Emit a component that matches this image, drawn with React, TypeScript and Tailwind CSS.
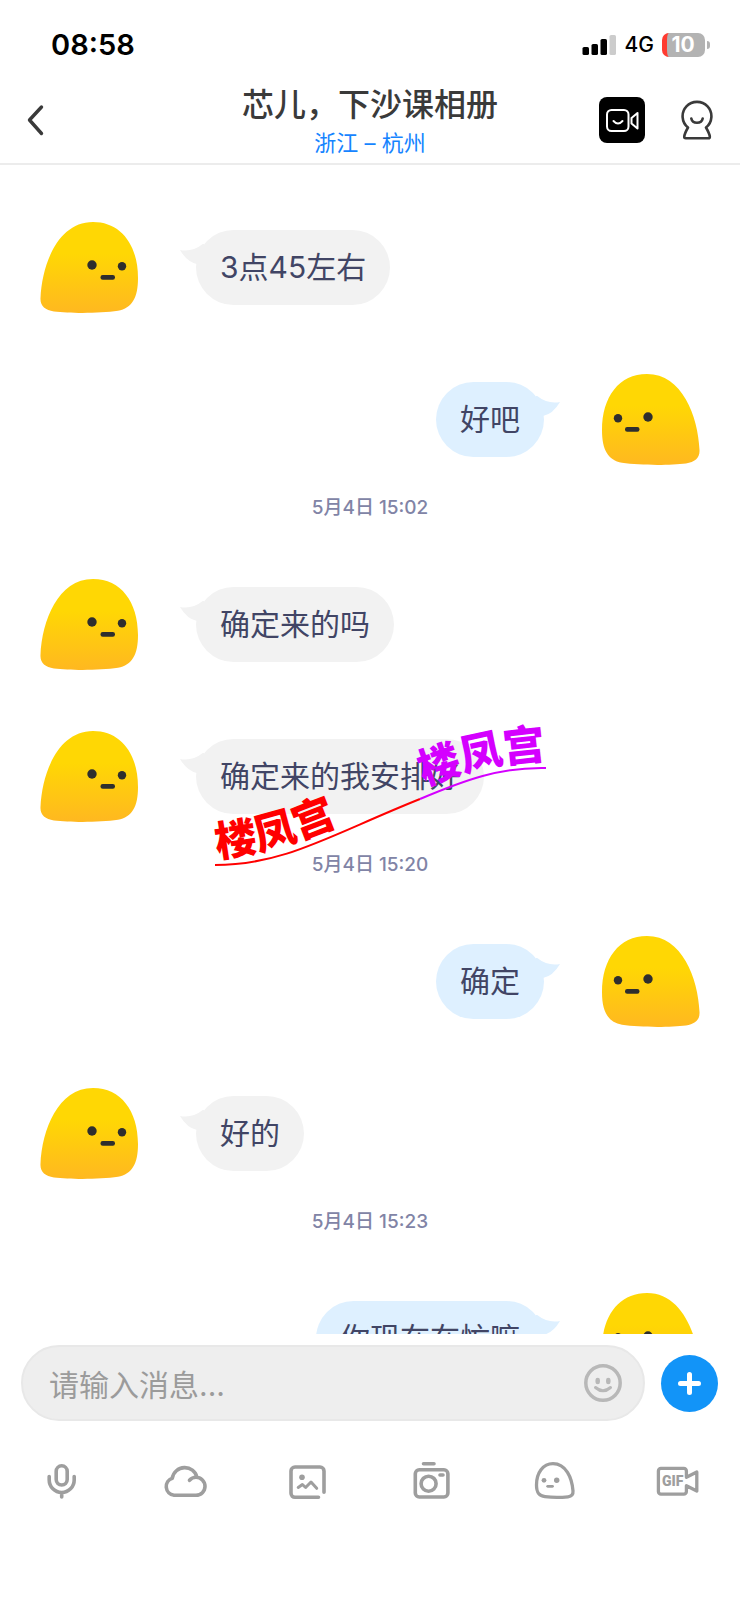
import React from "react";

type Side = "left" | "right";

interface Message {
  id: number;
  side: Side;
  text: string;
  time?: string;
  marked?: boolean;
}

const messages: Message[] = [
  { id: 1, side: "left", text: "3点45左右" },
  { id: 2, side: "right", text: "好吧", time: "5月4日 15:02" },
  { id: 3, side: "left", text: "确定来的吗" },
  { id: 4, side: "left", text: "确定来的我安排好", time: "5月4日 15:20", marked: true },
  { id: 5, side: "right", text: "确定" },
  { id: 6, side: "left", text: "好的", time: "5月4日 15:23" },
  { id: 7, side: "right", text: "你现在在忙嘛" },
];

const StatusBar: React.FC = () => (
  <div className="flex h-20 items-center justify-between pt-2.5 pr-[30px] pl-[51px] text-black">
    <span className="text-[29px] leading-8 font-semibold">08:58</span>
    <div className="flex items-center gap-2">
      <svg className="h-[22px] w-[35px]" viewBox="0 0 35 22">
        <rect x="0.5" y="13" width="6.5" height="8" rx="1.6" />
        <rect x="9.5" y="10" width="6.5" height="11" rx="1.6" />
        <rect x="18.5" y="5" width="6.5" height="16" rx="1.6" />
        <rect x="27.5" y="1" width="6.5" height="20" rx="1.6" fill="#cccccc" />
      </svg>
      <span className="text-[21px] leading-6 font-medium">4G</span>
      <div className="flex items-center gap-0.5">
        <div className="flex h-6 w-[43px] items-center justify-center overflow-hidden rounded-[7px] border-l-5 border-[#ff3b30] bg-[#b3b3b3] text-[21px] leading-6 font-bold text-white">
          <span className="pr-1.5">10</span>
        </div>
        <div className="h-2 w-[3px] rounded-r-full bg-[#b3b3b3]" />
      </div>
    </div>
  </div>
);

const NavBar: React.FC = () => (
  <nav className="box-content grid h-[83px] grid-cols-[1fr_auto_1fr] items-center border-b-2 border-[#ececec]">
    <button type="button" aria-label="返回" className="ml-[25px] w-5 pb-1">
      <svg className="h-8 w-5" viewBox="0 0 20 32" fill="none" stroke="#3a3a3a" strokeWidth="3.4" strokeLinecap="round" strokeLinejoin="round">
        <path d="M16.500 3 L4.500 16 L16.500 29.500" />
      </svg>
    </button>
    <div className="flex flex-col items-center pt-1">
      <h1 className="text-[32px] leading-[38px] font-medium text-[#3a3a3a]">芯儿，下沙课相册</h1>
      <p className="text-[22px] leading-[38px] text-[#1684ff]">浙江 – 杭州</p>
    </div>
    <div className="flex items-center justify-end gap-9 pr-[27px] pb-1">
      <button type="button" aria-label="视频通话" className="h-[46px] w-[46px] rounded-lg bg-black">
        <svg viewBox="0 0 46 46" fill="none" stroke="#ffffff" strokeWidth="2" strokeLinecap="round" strokeLinejoin="round">
          <rect x="8" y="13" width="21.5" height="21" rx="4.5" />
          <path d="M14.5 24 Q19 29 23.5 24" />
          <path d="M32.5 21 L38.5 16 V31.5 L32.5 26.5 Z" />
        </svg>
      </button>
      <button type="button" aria-label="个人资料">
        <svg className="h-10 w-8" viewBox="0 0 32 40" fill="none" stroke="#3a3a3a" strokeWidth="2.6" strokeLinecap="round" strokeLinejoin="round">
          <path d="M7 27.5 A14.4 14.4 0 1 1 25 27.5 C27 31 28.6 34 28.8 36.6 Q29 38.2 27.4 38.2 H4.8 Q3 38.2 3.3 36.6 C3.4 34 5 31 7 27.5 Z" />
          <path d="M10.3 18.5 C11.5 24.2 20.5 24.2 21.7 18.5" />
        </svg>
      </button>
    </div>
  </nav>
);

const Avatar: React.FC<{ side: Side }> = ({ side }) => (
  <svg
    className={side === "left" ? "h-[91px] w-[98px] shrink-0" : "h-[91px] w-[98px] shrink-0 -scale-x-100"}
    viewBox="0 0 98 91"
  >
    <defs>
      <linearGradient id={`skin-${side}`} x1="0" y1="0" x2="0" y2="1">
        <stop offset="0.35" stopColor="#ffd704" />
        <stop offset="1" stopColor="#ffb820" />
      </linearGradient>
    </defs>
    <path
      fill={`url(#skin-${side})`}
      d="M53 0 C81 0 98 23 98 56 C98 76 92 86 78 88.8 C60 91.5 30 91.5 14 89.5 C5 88 0 84 0.5 76 C2 42 18 0 53 0 Z"
    />
    <g fill="#2e2e2e">
      <circle cx="52" cy="43" r="4.7" />
      <circle cx="82" cy="44.3" r="4.2" />
      <rect x="60.5" y="53" width="14.5" height="4.7" rx="2.2" />
    </g>
  </svg>
);

const Watermark: React.FC = () => (
  <svg
    className="pointer-events-none absolute top-[19px] left-[210px] z-10 h-[150px] w-[340px]"
    viewBox="0 0 340 150"
    fill="none"
  >
    <defs>
      <path id="mark-low" d="M7 137 C50 133 90 122 145 97" />
      <path id="mark-high" d="M214 66 C255 50 290 41 350 38" />
    </defs>
    <path stroke="#ff0000" strokeWidth="2" d="M5 145 C75 145 120 115 210 79" />
    <path stroke="#d400ff" strokeWidth="2" d="M210 79 C255 60 290 47 336 48" />
    <g fontSize="42" fontWeight="900">
      <text fill="#ff0000">
        <textPath href="#mark-low">楼凤宫</textPath>
      </text>
      <text fill="#d400ff">
        <textPath href="#mark-high">楼凤宫</textPath>
      </text>
    </g>
  </svg>
);

const Bubble: React.FC<{ side: Side; text: string }> = ({ side, text }) => {
  const left = side === "left";
  return (
    <div
      className={
        left
          ? "relative rounded-[38px] bg-[#f2f2f2] px-6 py-4 text-[30px] leading-[43px] text-[#414565]"
          : "relative rounded-[38px] bg-[#def0ff] px-6 py-4 text-[30px] leading-[43px] text-[#414565]"
      }
    >
      <svg
        className={
          left
            ? "absolute top-3.5 -left-4 h-[22px] w-7 text-[#f2f2f2]"
            : "absolute top-3.5 -right-4 h-[22px] w-7 -scale-x-100 text-[#def0ff]"
        }
        viewBox="0 0 28 22"
      >
        <path fill="currentColor" d="M0 6 Q13 8.500 24 -1 V20 H17 Q7 18 0 6 Z" />
      </svg>
      {text}
    </div>
  );
};

const MessageRow: React.FC<{ message: Message }> = ({ message }) => {
  const { side, text, time, marked } = message;
  return (
    <li className="relative">
      <div
        className={
          side === "left"
            ? "flex items-center gap-[58px] px-10 pt-[30px] pb-[31px]"
            : "flex flex-row-reverse items-center gap-[58px] px-10 pt-[30px] pb-[31px]"
        }
      >
        <Avatar side={side} />
        <Bubble side={side} text={text} />
      </div>
      {time && (
        <time className="mb-[29px] block text-center text-[19px] leading-6 font-medium text-[#8184a6]">{time}</time>
      )}
      {marked && <Watermark />}
    </li>
  );
};

const tools: { label: string; icon: React.ReactNode }[] = [
  {
    label: "语音",
    icon: (
      <>
        <rect x="18.2" y="7.8" width="11" height="19.2" rx="5.5" />
        <path d="M11.2 18.5 V22 A12.5 12.5 0 0 0 36.2 22 V18.5 M23.700 35 V39" />
      </>
    ),
  },
  {
    label: "云",
    icon: (
      <path d="M28.500 22.3 C30.5 20 33 19.3 35 19.3 A9 9 0 0 1 35 37.3 H13 A8.8 8.8 0 0 1 11.3 20.2 A12.6 12.6 0 0 1 36 19.3" />
    ),
  },
  {
    label: "图片",
    icon: (
      <>
        <path d="M34.5 39.3 H11 A4 4 0 0 1 7 35.3 V13 A4 4 0 0 1 11 9 H36 A4 4 0 0 1 40 13 V34.3" />
        <path d="M14.2 29.5 L18.4 26.5 L21.6 29.5 L27 24 L32.7 30.3" strokeWidth="3" />
        <circle cx="18" cy="19.3" r="2.8" fill="currentColor" stroke="none" />
      </>
    ),
  },
  {
    label: "拍照",
    icon: (
      <>
        <rect x="7.3" y="11.8" width="32.6" height="27.2" rx="4" />
        <circle cx="20.6" cy="25.7" r="7.5" />
        <path d="M15.5 5.7 H26 M32 17 H35" />
      </>
    ),
  },
  {
    label: "贴纸",
    icon: (
      <>
        <path d="M22 5.7 C12 5.7 5.5 15 5.5 27 C5.5 35 8 38 14 38.7 C21 39.6 30 39.6 37 38.8 C41 38.3 42.3 36.5 42 33 C41 20 35 5.7 22 5.7 Z" strokeWidth="3.3" />
        <circle cx="13" cy="22.3" r="2.4" fill="currentColor" stroke="none" />
        <circle cx="25.7" cy="22.3" r="2.7" fill="currentColor" stroke="none" />
        <path d="M16.7 28.3 H21.5" strokeWidth="2.8" />
      </>
    ),
  },
  {
    label: "动图",
    icon: (
      <>
        <path d="M32.4 19.3 V13 A2.6 2.6 0 0 0 29.8 10.3 H7 A2.6 2.6 0 0 0 4.4 13 V33.5 A2.6 2.6 0 0 0 7 36.1 H29.8 A2.6 2.6 0 0 0 32.4 33.5 V27.7 L42.800 33 V14 L32.4 19.3" strokeWidth="3.3" />
        <text
          x="8"
          y="28"
          fill="currentColor"
          stroke="none"
          fontSize="14"
          fontWeight="900"
          fontFamily="Roboto, 'Liberation Sans', sans-serif"
        >
          GIF
        </text>
      </>
    ),
  },
];

const Composer: React.FC = () => (
  <footer className="shrink-0 bg-white pt-[11px] pb-[94px]">
    <div className="flex items-center gap-4 pr-[22px] pl-[21px]">
      <div className="flex h-[76px] min-w-0 flex-1 items-center rounded-full border-2 border-[#e8e8e8] bg-[#eeeeee] pr-5 pl-[26px]">
        <input
          type="text"
          aria-label="消息"
          placeholder="请输入消息..."
          className="h-12 min-w-0 flex-1 bg-transparent pt-1 text-[30px] text-[#414565] outline-none placeholder:text-[#9b9b9b]"
        />
        <button type="button" aria-label="表情">
          <svg className="h-10 w-10" viewBox="0 0 40 40" fill="none" stroke="#b8b8b8" strokeWidth="3.5" strokeLinecap="round">
            <circle cx="20" cy="20" r="17.2" />
            <path d="M12.5 24.5 Q20 31 27.5 24.5" strokeWidth="3" />
            <path d="M14.7 17 V19 M25.3 17 V19" strokeWidth="4.5" />
          </svg>
        </button>
      </div>
      <button type="button" aria-label="更多" className="h-[57px] w-[57px] shrink-0 rounded-full bg-[#1294f8]">
        <svg viewBox="0 0 57 57" stroke="#ffffff" strokeWidth="5" strokeLinecap="round">
          <path d="M28.5 19.5 V37.5 M19.5 28.5 H37.5" />
        </svg>
      </button>
    </div>
    <div className="mt-[37px] grid grid-cols-6 justify-items-center text-[#9e9e9e]">
      {tools.map((tool) => (
        <button key={tool.label} type="button" aria-label={tool.label}>
          <svg
            className="h-12 w-12"
            viewBox="0 0 48 48"
            fill="none"
            stroke="currentColor"
            strokeWidth="3.6"
            strokeLinecap="round"
            strokeLinejoin="round"
          >
            {tool.icon}
          </svg>
        </button>
      ))}
    </div>
  </footer>
);

const App: React.FC = () => {
  return (
    <div className="flex h-screen flex-col bg-white font-[Inter,'Noto_Sans_CJK_SC',sans-serif]">
      <header className="shrink-0">
        <StatusBar />
        <NavBar />
      </header>
      <main className="min-h-0 flex-1 overflow-hidden pt-[27px]">
        <ul>
          {messages.map((message) => (
            <MessageRow key={message.id} message={message} />
          ))}
        </ul>
      </main>
      <Composer />
    </div>
  );
};

export default App;
